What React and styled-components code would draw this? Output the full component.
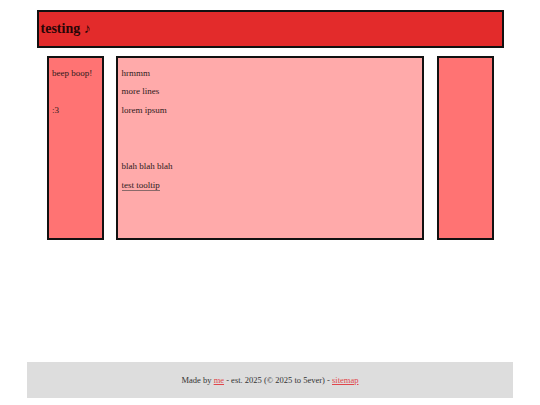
import React from 'react';
import styled, { createGlobalStyle } from 'styled-components';

const GlobalStyle = createGlobalStyle`
  html, body {
    margin: 0;
    padding: 0;
    background: #ffffff;
    font-family: "Liberation Serif", "Times New Roman", serif;
  }
`;

const Page = styled.div`
  min-height: 405px;
  display: flex;
  flex-direction: column;
  align-items: center;
  box-sizing: border-box;
  padding: 10px 0 7px;
`;

const Header = styled.header`
  width: 467px;
  height: 38px;
  box-sizing: border-box;
  background-color: #e32b2b;
  border: 2.5px solid #111;
  display: flex;
  align-items: center;
  padding: 0 2px;
  h1 {
    margin: 0;
    font-size: 14px;
    font-weight: bold;
    color: #2a0606;
  }
`;

const Columns = styled.main`
  width: 447px;
  margin-top: 8px;
  display: flex;
  gap: 12.5px;
  height: 184px;
`;

const Panel = styled.section`
  box-sizing: border-box;
  width: ${p => p.$width}px;
  flex: ${p => (p.$grow ? '1' : 'none')};
  background-color: ${p => p.$bg};
  border: 2.5px solid #111;
  padding: 0 3.5px;
  color: #2e1a1a;
  font-size: 9px;
  p {
    margin: 8.7px 0;
    line-height: 10px;
  }
  p:first-child {
    margin-top: 9.5px;
  }
`;

const Tip = styled.abbr`
  text-decoration: none;
  border-bottom: 1px solid #8a6a6a;
  cursor: help;
`;

const Footer = styled.footer`
  margin-top: auto;
  width: 486px;
  height: 36px;
  background-color: #dddddd;
  display: flex;
  align-items: center;
  justify-content: center;
  font-size: 8.5px;
  color: #333;
  a {
    color: #e0474c;
  }
`;

export default function App() {
  return (
    <>
      <GlobalStyle />
      <Page>
        <Header>
          <h1>testing ♪</h1>
        </Header>
        <Columns>
          <Panel $width={57} $bg="#ff7373">
            <p>beep boop!</p>
            <p>&nbsp;</p>
            <p>:3</p>
          </Panel>
          <Panel $grow $bg="#ffaaaa">
            <p>hrmmm</p>
            <p>more lines</p>
            <p>lorem ipsum</p>
            <p>&nbsp;</p>
            <p>&nbsp;</p>
            <p>blah blah blah</p>
            <p>
              <Tip title="tooltip!">test tooltip</Tip>
            </p>
          </Panel>
          <Panel $width={57} $bg="#ff7373" />
        </Columns>
        <Footer>
          <span>
            Made by <a href="#">me</a> - est. 2025 (© 2025 to 5ever) - <a href="#">sitemap</a>
          </span>
        </Footer>
      </Page>
    </>
  );
}
